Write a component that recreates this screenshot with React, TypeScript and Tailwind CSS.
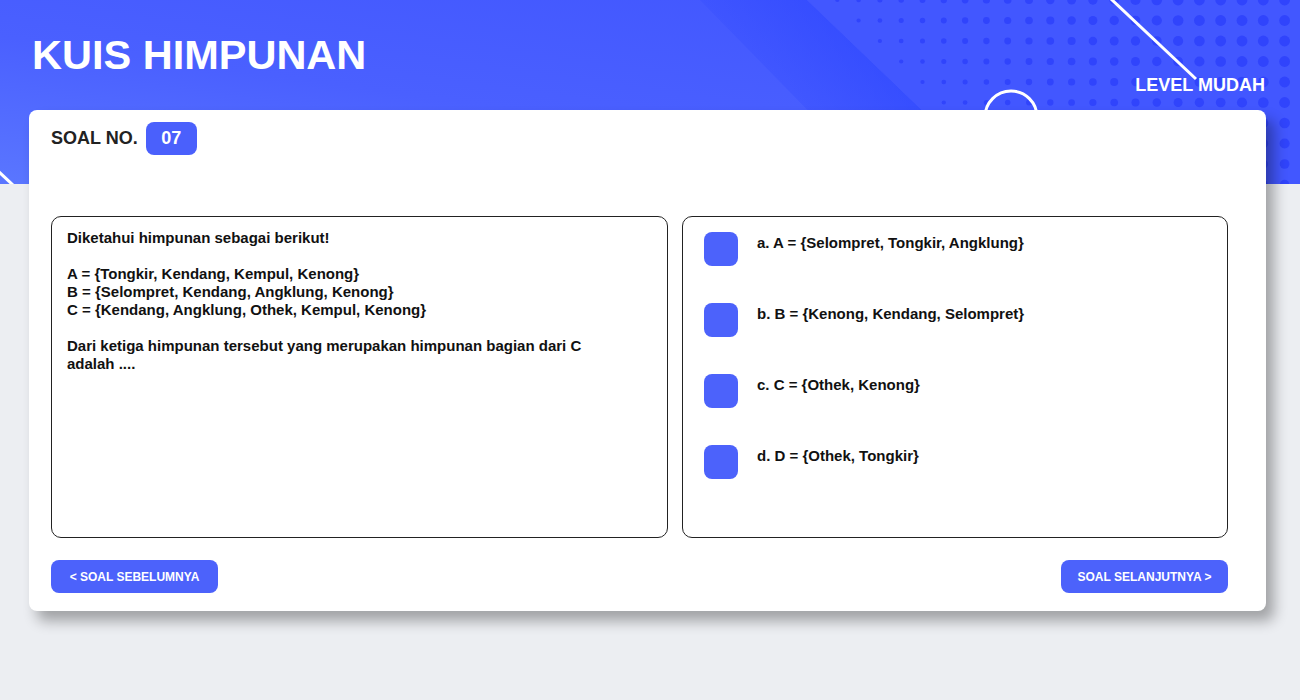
import React from 'react';

const options = [
  'a. A = {Selompret, Tongkir, Angklung}',
  'b. B = {Kenong, Kendang, Selompret}',
  'c. C = {Othek, Kenong}',
  'd. D = {Othek, Tongkir}',
];

// header backdrop: gradient, dark diagonal stripe, dot grid, white lines
const HeaderArt: React.FC = () => {
  const dots: { x: number; y: number; r: number }[] = [];
  for (let y = 0; y <= 190; y += 20.5) {
    for (let x = 816; x <= 1300; x += 21.3) {
      const edge = 807 + y * 1.045;
      if (x < edge + 22) continue;
      const t = Math.min(1, (x - edge) / 360);
      dots.push({ x, y, r: 1.8 + t * 3.6 });
    }
  }
  return (
    <svg
      className="absolute inset-0 w-full h-full"
      viewBox="0 0 1300 184"
      preserveAspectRatio="none"
    >
      <defs>
        <linearGradient id="bg" x1="1" y1="0" x2="0" y2="1">
          <stop offset="0" stopColor="#3f54ff" />
          <stop offset="0.6" stopColor="#4a60ff" />
          <stop offset="1" stopColor="#5a76ff" />
        </linearGradient>
        <linearGradient id="stripe" x1="0" y1="0.5" x2="1" y2="0" gradientUnits="objectBoundingBox">
          <stop offset="0" stopColor="#2a44ff" stopOpacity="0" />
          <stop offset="0.6" stopColor="#2640ff" stopOpacity="0.55" />
          <stop offset="1" stopColor="#1a34ff" stopOpacity="1" />
        </linearGradient>
      </defs>
      <rect x="0" y="0" width="1300" height="184" fill="url(#bg)" />
      <polygon points="700,0 807,0 999,184 880,184" fill="url(#stripe)" />
      <polygon points="807,0 1300,0 1300,184 999,184" fill="#4257ff" />
      {dots.map((d, i) => (
        <circle key={i} cx={d.x} cy={d.y} r={d.r} fill="#3044fc" />
      ))}
      <line x1="1110" y1="-2" x2="1196" y2="79" stroke="#ffffff" strokeWidth="3" />
      <circle cx="1011" cy="117" r="26" fill="none" stroke="#ffffff" strokeWidth="3" />
      <line x1="-2" y1="171" x2="14" y2="186" stroke="#ffffff" strokeWidth="3" />
    </svg>
  );
};

const App: React.FC = () => {
  return (
    <div
      className="min-h-screen bg-[#eceef2]"
      style={{ fontFamily: '"Liberation Sans", Arial, sans-serif' }}
    >
      <div className="relative h-[184px] overflow-hidden">
        <HeaderArt />
        <div className="relative flex justify-between pl-[32px] pr-[35px]">
          <h1 className="mt-[31px] text-[41.5px] leading-[48px] font-bold text-white">KUIS HIMPUNAN</h1>
          <div className="mt-[74px] text-[18px] leading-[22px] font-bold text-white">LEVEL MUDAH</div>
        </div>
      </div>

      <div className="relative -mt-[74px] ml-[29px] w-[1237px] h-[501px] rounded-[8px] bg-white shadow-[8px_10px_14px_rgba(0,0,0,0.32)] pl-[22px] pr-[38px] pt-[12px] flex flex-col">
        <div className="flex items-center gap-[8px]">
          <span className="text-[18px] font-bold text-[#222]">SOAL NO.</span>
          <span className="w-[51px] h-[33px] rounded-[8px] bg-[#4a60fc] text-white text-[18px] font-bold flex items-center justify-center">
            07
          </span>
        </div>

        <div className="mt-[61px] flex gap-[14px] h-[322px]">
          <div className="w-[617px] border border-[#222] rounded-[10px] pl-[15px] pt-[12px] text-[15px] leading-[18px] font-bold text-[#111]">
            <p>Diketahui himpunan sebagai berikut!</p>
            <p className="mt-[18px]">A = {'{'}Tongkir, Kendang, Kempul, Kenong{'}'}</p>
            <p>B = {'{'}Selompret, Kendang, Angklung, Kenong{'}'}</p>
            <p>C = {'{'}Kendang, Angklung, Othek, Kempul, Kenong{'}'}</p>
            <p className="mt-[18px] w-[540px]">
              Dari ketiga himpunan tersebut yang merupakan himpunan bagian dari C adalah ....
            </p>
          </div>
          <div className="flex-1 border border-[#222] rounded-[10px] pl-[21px] pt-[15px] flex flex-col gap-[37px]">
            {options.map((o) => (
              <div key={o} className="flex items-start gap-[19px]">
                <div className="w-[34px] h-[34px] rounded-[8px] bg-[#4c62fb] shrink-0" />
                <span className="mt-[2px] text-[15px] leading-[18px] font-bold text-[#111]">{o}</span>
              </div>
            ))}
          </div>
        </div>

        <div className="mt-[22px] flex justify-between">
          <button className="w-[167px] h-[33px] rounded-[8px] bg-[#4c62fb] text-white text-[12px] font-bold">
            &lt; SOAL SEBELUMNYA
          </button>
          <button className="w-[167px] h-[33px] rounded-[8px] bg-[#4c62fb] text-white text-[12px] font-bold">
            SOAL SELANJUTNYA &gt;
          </button>
        </div>
      </div>
    </div>
  );
};

export default App;
